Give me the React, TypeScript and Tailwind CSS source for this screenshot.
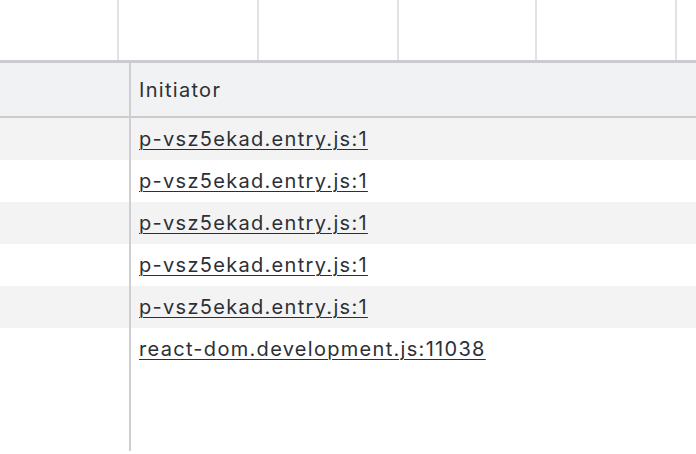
import React from 'react';

const rows = [
  'p-vsz5ekad.entry.js:1',
  'p-vsz5ekad.entry.js:1',
  'p-vsz5ekad.entry.js:1',
  'p-vsz5ekad.entry.js:1',
  'p-vsz5ekad.entry.js:1',
  'react-dom.development.js:11038',
];

const tickWidths = ['w-[119px]', 'w-[140px]', 'w-[140px]', 'w-[138px]', 'w-[140px]'];

export default function App() {
  return (
    <div className="w-[696px] h-[454px] overflow-hidden bg-white text-[#2c3035] font-['Inter','Liberation_Sans',sans-serif] text-[20px] tracking-[1.3px]">
      {/* overview ruler */}
      <div className="flex h-[60px]">
        {tickWidths.map((w, i) => (
          <div key={i} className={`${w} shrink-0 border-r-2 border-[#e3e3e3]`} />
        ))}
        <div className="flex-1" />
      </div>

      {/* table */}
      <div className="border-t-[3px] border-[#cbccd0] flex h-[391px]">
        <div className="w-[129px] shrink-0 flex flex-col">
          <div className="h-[55px] bg-[#f1f2f4] border-b-2 border-[#cbcbcd]" />
          {rows.map((_, i) => (
            <div key={i} className={`h-[42px] ${i % 2 === 0 ? 'bg-[#f3f3f3]' : 'bg-white'}`} />
          ))}
        </div>
        <div className="w-[2px] shrink-0 bg-[#cfcfd3]" />
        <div className="flex-1 flex flex-col">
          <div className="h-[55px] bg-[#f1f2f4] border-b-2 border-[#cbcbcd] flex items-center pl-[8px]">
            Initiator
          </div>
          {rows.map((r, i) => (
            <div
              key={i}
              className={`h-[42px] flex items-center pl-[8px] ${i % 2 === 0 ? 'bg-[#f3f3f3]' : 'bg-white'}`}
            >
              <span className="underline underline-offset-[3px] decoration-1">{r}</span>
            </div>
          ))}
        </div>
      </div>
    </div>
  );
}
